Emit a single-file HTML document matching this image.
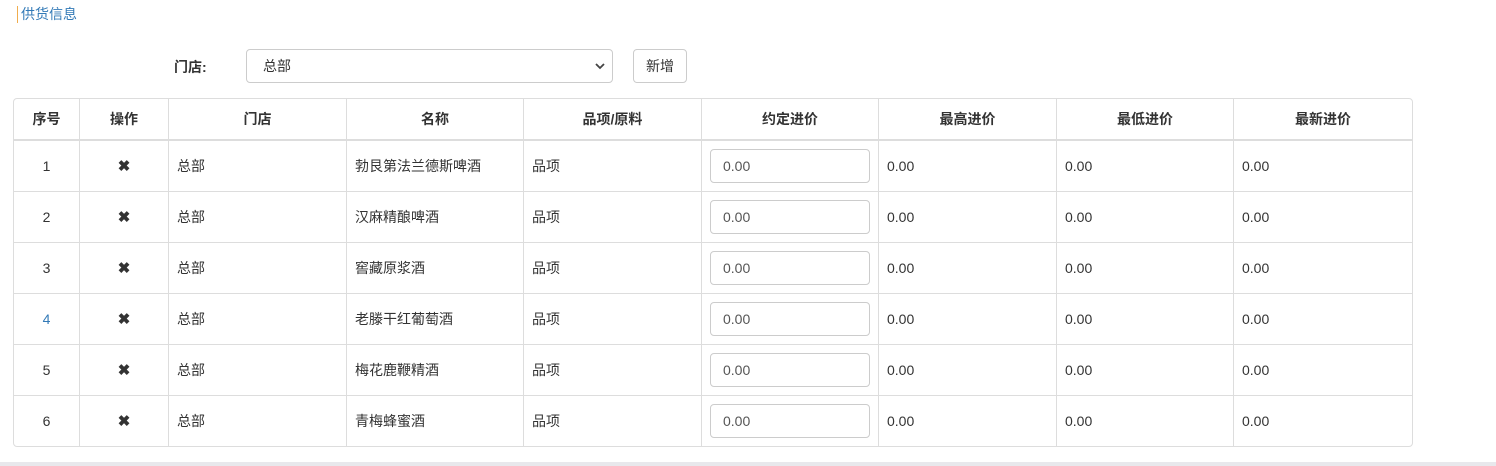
<!DOCTYPE html>
<html><head><meta charset="utf-8"><style>
*{box-sizing:border-box}
body{margin:0;width:1496px;height:466px;background:#fff;font-family:"Liberation Sans","Noto Sans CJK SC",sans-serif;font-size:14px;color:#333;position:relative;overflow:hidden}
.title{position:absolute;left:17px;top:6px;color:#337ab7;font-size:14px;border-left:1px solid #f0ad4e;padding-left:3px;line-height:17px}
.lbl{position:absolute;left:174px;top:57px;font-weight:bold;font-size:14px}
.sel{position:absolute;left:246px;top:49px;width:367px;height:34px;border:1px solid #ccc;border-radius:4px;padding:6px 16px;font-size:14px;line-height:20px}
.sel svg{position:absolute;right:7px;top:12px}
.btn{position:absolute;left:633px;top:49px;width:54px;height:34px;border:1px solid #ccc;border-radius:4px;text-align:center;line-height:33px;font-size:14px}
table{position:absolute;left:13px;top:98px;border-collapse:separate;border-spacing:0;border:1px solid #ddd;border-radius:4px;table-layout:fixed;width:1399px}
td,th{border-right:1px solid #ddd;border-bottom:1px solid #ddd;padding:0 8px;font-size:14px}
td:last-child,th:last-child{border-right:none}
tr:last-child td{border-bottom:none}
th{height:42px;border-bottom:2px solid #ddd;text-align:center;font-weight:bold}
td{height:51px}
tr:last-child td{height:50px}
.c{text-align:center}
.x{font-weight:bold;font-size:15px}
.in{width:160px;height:34px;border:1px solid #ccc;border-radius:4px;padding:0 12px;line-height:32px;font-size:14px;color:#555}
.bot{position:absolute;left:0;top:462px;width:1496px;height:4px;background:#e8e8ec}
</style></head><body>
<div class="title">供货信息</div>
<div class="lbl">门店:</div>
<div class="sel">总部<svg width="10" height="8" viewBox="0 0 10 8"><path d="M1 2l4 4 4-4" stroke="#444" stroke-width="1.8" fill="none"/></svg></div>
<div class="btn">新增</div>
<table>
<colgroup><col style="width:66px"><col style="width:89px"><col style="width:178px"><col style="width:177px"><col style="width:178px"><col style="width:177px"><col style="width:178px"><col style="width:177px"><col style="width:178px"></colgroup>
<tr><th>序号</th><th>操作</th><th>门店</th><th>名称</th><th>品项/原料</th><th>约定进价</th><th>最高进价</th><th>最低进价</th><th>最新进价</th></tr>
<tr><td class="c">1</td><td class="c x">✖</td><td>总部</td><td>勃艮第法兰德斯啤酒</td><td>品项</td><td><div class="in">0.00</div></td><td>0.00</td><td>0.00</td><td>0.00</td></tr>
<tr><td class="c">2</td><td class="c x">✖</td><td>总部</td><td>汉麻精酿啤酒</td><td>品项</td><td><div class="in">0.00</div></td><td>0.00</td><td>0.00</td><td>0.00</td></tr>
<tr><td class="c">3</td><td class="c x">✖</td><td>总部</td><td>窖藏原浆酒</td><td>品项</td><td><div class="in">0.00</div></td><td>0.00</td><td>0.00</td><td>0.00</td></tr>
<tr><td class="c" style="color:#337ab7">4</td><td class="c x">✖</td><td>总部</td><td>老滕干红葡萄酒</td><td>品项</td><td><div class="in">0.00</div></td><td>0.00</td><td>0.00</td><td>0.00</td></tr>
<tr><td class="c">5</td><td class="c x">✖</td><td>总部</td><td>梅花鹿鞭精酒</td><td>品项</td><td><div class="in">0.00</div></td><td>0.00</td><td>0.00</td><td>0.00</td></tr>
<tr><td class="c">6</td><td class="c x">✖</td><td>总部</td><td>青梅蜂蜜酒</td><td>品项</td><td><div class="in">0.00</div></td><td>0.00</td><td>0.00</td><td>0.00</td></tr>
</table>
<div class="bot"></div>
</body></html>
